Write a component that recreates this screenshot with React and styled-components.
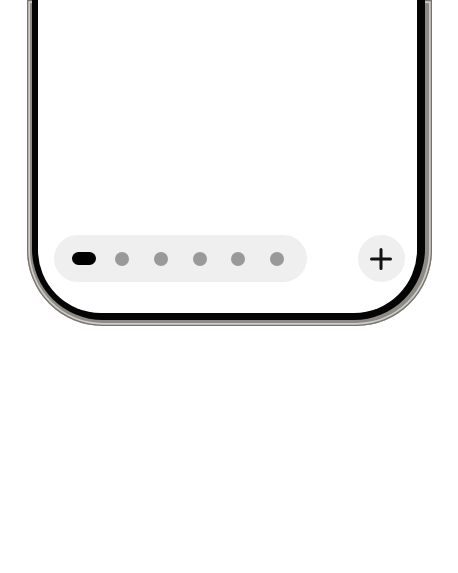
import styled, { createGlobalStyle } from 'styled-components';

const GlobalStyle = createGlobalStyle`
  html, body {
    margin: 0;
    padding: 0;
    background: #fff;
    font-family: 'Inter', 'Liberation Sans', sans-serif;
  }
`;

const Page = styled.div`
  width: 458px;
  height: 573px;
  background: #fff;
  padding-left: 26.7px;
  box-sizing: border-box;
`;

const Frame = styled.div`
  width: 405px;
  height: 326px;
  box-sizing: border-box;
  padding: 0 6.5px 6.5px 5px;
  border-radius: 0 0 76px 76px;
  background: #8e8b86;
  box-shadow: inset 0 0 0 1.3px #77746f, inset 0 0 0 3px #cfcdc9;
  display: flex;
`;

const Bezel = styled.div`
  flex: 1;
  padding: 0 8px 6.5px 6.5px;
  border-radius: 0 0 71px 71px;
  background: #050505;
  display: flex;
`;

const Screen = styled.div`
  flex: 1;
  background: #fff;
  border-radius: 0 0 63px 63px;
  display: flex;
  flex-direction: column;
  justify-content: flex-end;
`;

const BottomBar = styled.div`
  display: flex;
  align-items: center;
  justify-content: space-between;
  padding: 0 12.7px 31px 15.7px;
`;

const Pager = styled.div`
  display: flex;
  align-items: center;
  height: 47px;
  padding: 0 10.5px;
  border-radius: 24px;
  background: #efefef;
`;

const Slot = styled.div`
  width: 38.7px;
  display: flex;
  justify-content: center;
`;

const Dot = styled.span`
  display: block;
  height: ${p => (p.$active ? 13 : 14)}px;
  width: ${p => (p.$active ? 24 : 14)}px;
  border-radius: 7px;
  background: ${p => (p.$active ? '#000' : '#999')};
`;

const AddButton = styled.button`
  width: 47px;
  height: 47px;
  border-radius: 50%;
  border: none;
  padding: 0;
  background: #efefef;
  display: flex;
  align-items: center;
  justify-content: center;
  cursor: pointer;
`;

const PlusIcon = () => (
  <svg width="22" height="22" viewBox="0 0 22 22" fill="none">
    <path d="M11 1.5v19M1.5 11h19" stroke="#111" strokeWidth="3" strokeLinecap="round" />
  </svg>
);

const pages = [0, 1, 2, 3, 4, 5];

export default function App() {
  const current = 0;
  return (
    <>
      <GlobalStyle />
      <Page>
        <Frame>
          <Bezel>
            <Screen>
              <BottomBar>
                <Pager>
                  {pages.map(i => (
                    <Slot key={i}>
                      <Dot $active={i === current} />
                    </Slot>
                  ))}
                </Pager>
                <AddButton aria-label="Add page">
                  <PlusIcon />
                </AddButton>
              </BottomBar>
            </Screen>
          </Bezel>
        </Frame>
      </Page>
    </>
  );
}
